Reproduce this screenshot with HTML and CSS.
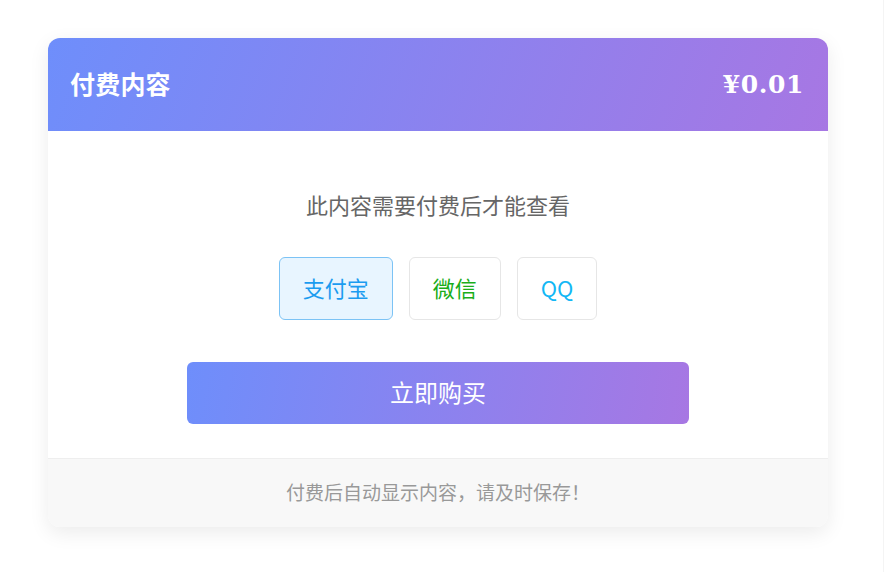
FILE: index.html
```html
<!DOCTYPE html>
<html lang="zh-CN">
<head>
<meta charset="utf-8">
<title>付费内容</title>
<link rel="stylesheet" href="styles.css">
</head>
<body>
<div class="page">
  <div class="card">
    <div class="card-header">
      <h2 class="title">付费内容</h2>
      <span class="price">¥0.01</span>
    </div>
    <div class="card-body">
      <p class="notice">此内容需要付费后才能查看</p>
      <div class="methods">
        <button class="method alipay active">支付宝</button>
        <button class="method wechat">微信</button>
        <button class="method qq">QQ</button>
      </div>
      <button class="buy">立即购买</button>
    </div>
    <div class="card-footer">付费后自动显示内容，请及时保存！</div>
  </div>
</div>
</body>
</html>
```
FILE: styles.css
```css
* { box-sizing: border-box; }
html, body { margin: 0; padding: 0; background: #fff; }
body {
  font-family: "Noto Sans CJK SC", "Noto Sans", sans-serif;
}
.page {
  width: 884px;
  min-height: 572px;
  border-right: 1px solid #f4f4f4;
  padding: 38px 0 0 48px;
}
.card {
  width: 780px;
  border-radius: 12px;
  overflow: hidden;
  background: #fff;
  box-shadow: 0 6px 20px rgba(0, 0, 0, 0.08);
}
.card-header {
  height: 93px;
  display: flex;
  align-items: center;
  justify-content: space-between;
  padding: 0 24px 0 22px;
  background: linear-gradient(110deg, #6e8efb 0%, #a777e3 100%);
  color: #fff;
}
.title {
  margin: 0 0 4px;
  font-size: 25px;
  line-height: 36px;
  font-weight: 700;
  letter-spacing: 0.2px;
}
.price {
  font-family: "DejaVu Serif", "Liberation Serif", serif;
  font-weight: 700;
  font-size: 25px;
  letter-spacing: 0.6px;
}
.card-body {
  padding: 57px 0 34px;
  display: flex;
  flex-direction: column;
  align-items: center;
}
.notice {
  margin: 0 0 1px;
  font-size: 22px;
  line-height: 32px;
  color: #666;
}
.methods {
  display: flex;
  gap: 16px;
  margin-top: 36px;
}
.method {
  height: 63px;
  padding: 0 23px 4px;
  font-family: inherit;
  font-size: 22px;
  background: #fff;
  border: 1.5px solid #e6e6e6;
  border-radius: 6px;
}
.method.active {
  background: #e8f5ff;
  border-color: #7cc3f5;
}
.alipay { color: #1b9cf0; }
.wechat { color: #1aad19; }
.qq { color: #12b7f5; }
.buy {
  margin-top: 42px;
  width: 502px;
  height: 62px;
  padding: 0 0 4px;
  border: none;
  border-radius: 6px;
  background: linear-gradient(100deg, #6e8efb 0%, #a777e3 100%);
  color: #fff;
  font-family: inherit;
  font-size: 24px;
}
.card-footer {
  height: 69px;
  padding-bottom: 4px;
  border-top: 1px solid #eeeeee;
  background: #f8f8f8;
  display: flex;
  align-items: center;
  justify-content: center;
  font-size: 19px;
  color: #999;
}
```
